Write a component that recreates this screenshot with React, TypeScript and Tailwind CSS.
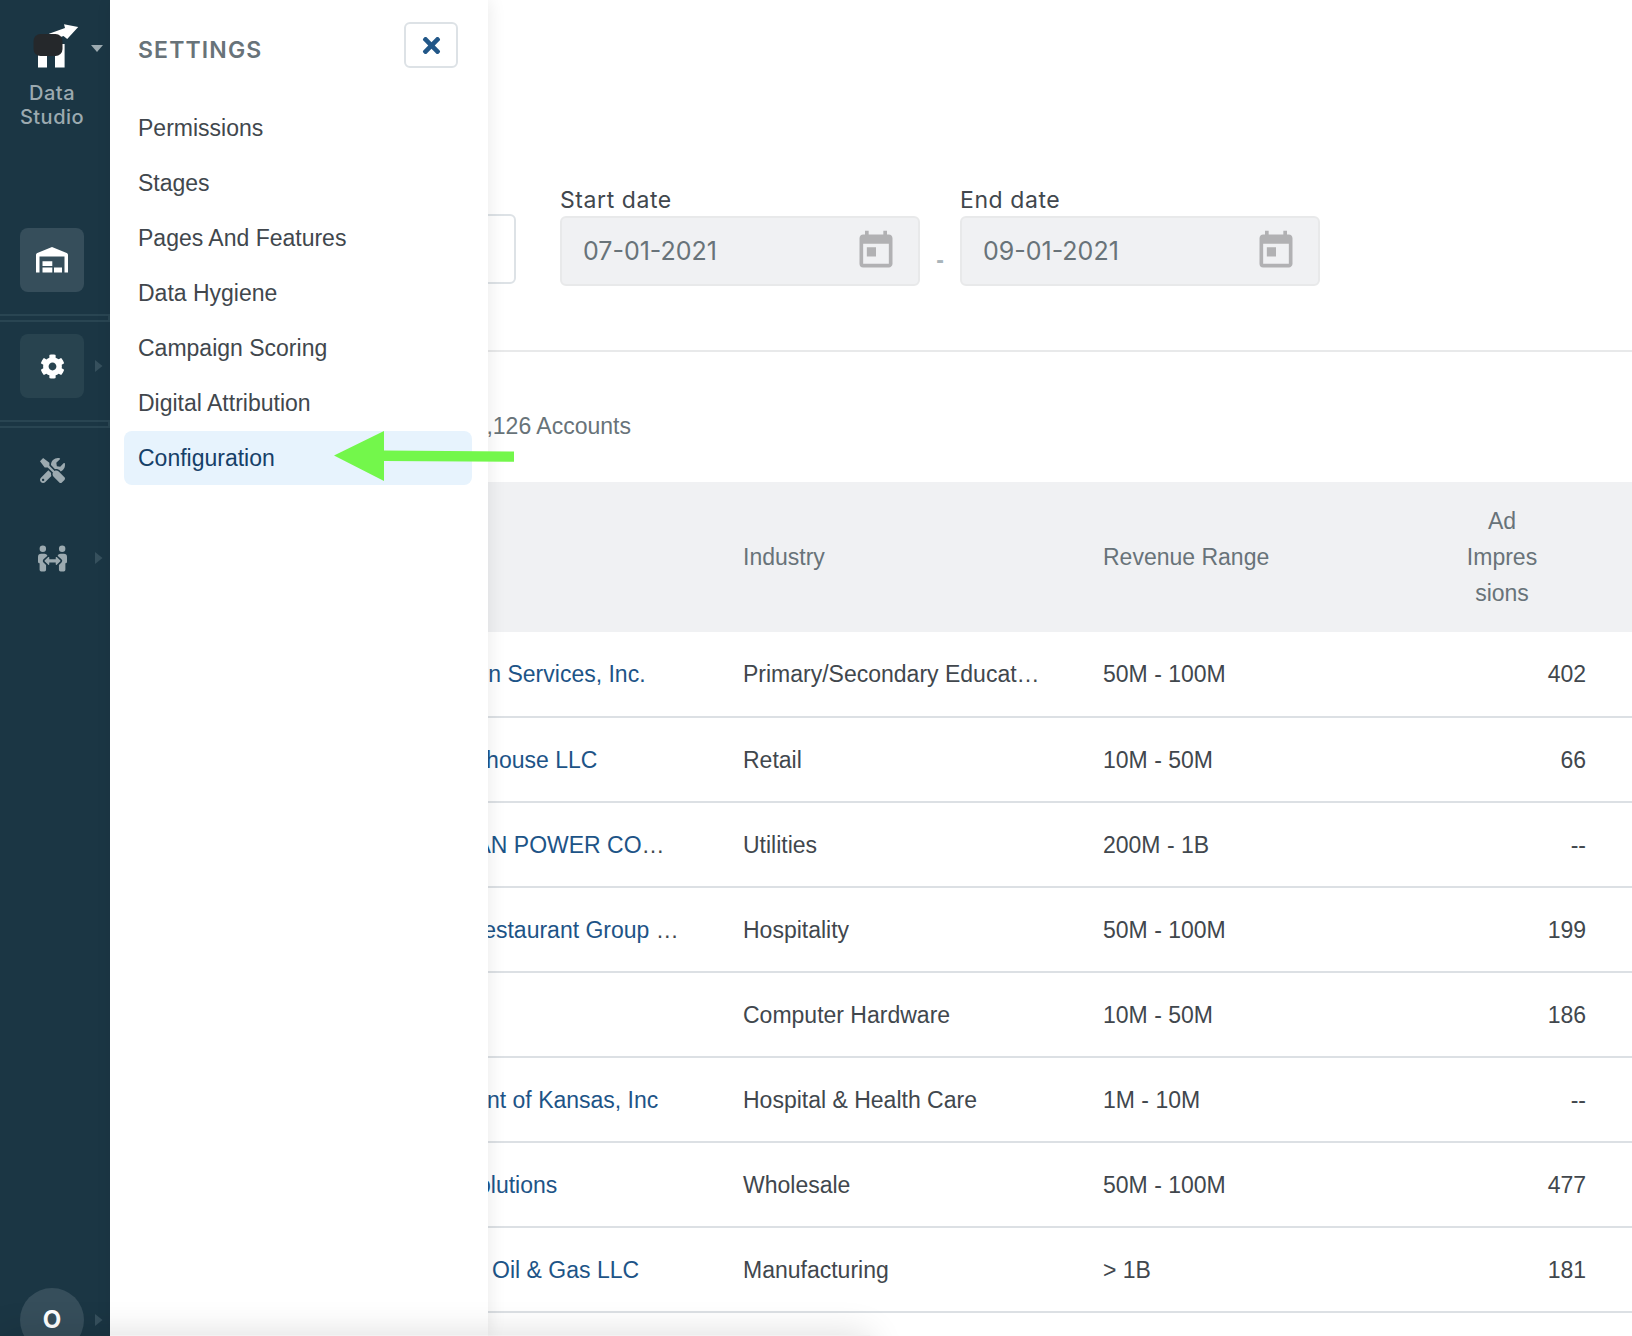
import React, { useState } from "react"
import { FaCog, FaPeopleArrows, FaTimes, FaTools } from "react-icons/fa"
import { MdToday } from "react-icons/md"

interface Account {
	name: string
	/** Set when the name was shortened; the ellipsis stays outside the link. */
	shortened?: boolean
	industry: string
	revenue: string
	impressions: string
}

const ACCOUNTS: Account[] = [
	{
		name: "Foundation Services, Inc.",
		industry: "Primary/Secondary Educat…",
		revenue: "50M - 100M",
		impressions: "402",
	},
	{ name: "Ace Warehouse LLC", industry: "Retail", revenue: "10M - 50M", impressions: "66" },
	{ name: "AMERICAN POWER CO", shortened: true, industry: "Utilities", revenue: "200M - 1B", impressions: "--" },
	{
		name: "Legacy Restaurant Group ",
		shortened: true,
		industry: "Hospitality",
		revenue: "50M - 100M",
		impressions: "199",
	},
	{ name: "Dyntek", industry: "Computer Hardware", revenue: "10M - 50M", impressions: "186" },
	{
		name: "Department of Kansas, Inc",
		industry: "Hospital & Health Care",
		revenue: "1M - 10M",
		impressions: "--",
	},
	{ name: "Harbor Solutions", industry: "Wholesale", revenue: "50M - 100M", impressions: "477" },
	{ name: "Stonewall Oil & Gas LLC", industry: "Manufacturing", revenue: "> 1B", impressions: "181" },
]

const SETTINGS_ITEMS = [
	"Permissions",
	"Stages",
	"Pages And Features",
	"Data Hygiene",
	"Campaign Scoring",
	"Digital Attribution",
	"Configuration",
]

const Logo = () => (
	<svg width="46" height="46" viewBox="33 23 46 46" aria-hidden="true">
		<path d="M78.200 27 64 24.300l1 3.700-16 5.800 2 6.500 12.500-4.300 3.700 3z" fill="#fff" />
		<path d="M38 50h9v17.500h-9zM55 44h9.600v23.500H55z" fill="#fff" />
		<rect x="33.500" y="34" width="29" height="22" rx="7" fill="#25282b" />
	</svg>
)

const WarehouseIcon = () => (
	<svg width="32" height="26" viewBox="0 0 32 26" fill="currentColor" aria-hidden="true">
		<path d="M16 0 1.300 5.900A2 2 0 0 0 0 7.800V25.500h3.500V9.500h25v16H32V7.800a2 2 0 0 0-1.300-1.900z" />
		<path d="M6.500 14.200h9.800v4.700H6.500zM6.500 20.500h9.800v5H6.500zM18 20.500h8v5h-8z" />
	</svg>
)

const SubmenuCaret = () => (
	<svg width="8" height="12" viewBox="0 0 8 12" className="ml-[11px] shrink-0" aria-hidden="true">
		<path d="M0 0v12l7.500-6z" fill="#36505d" />
	</svg>
)

interface NavItemProps {
	label: string
	tileClass?: string
	hasSubmenu?: boolean
	children: React.ReactNode
}

const NavItem: React.FC<NavItemProps> = ({ label, tileClass = "text-[#9caab0]", hasSubmenu, children }) => (
	<div className="flex items-center pl-5">
		<button
			type="button"
			aria-label={label}
			className={`flex size-16 shrink-0 items-center justify-center rounded-lg ${tileClass}`}>
			{children}
		</button>
		{hasSubmenu && <SubmenuCaret />}
	</div>
)

const NavSeparator = () => <div className="h-2 border-2 border-l-0 border-[#294552]" />

const NavRail = () => (
	<nav className="flex w-[110px] shrink-0 flex-col bg-[#1b3644]">
		<button type="button" className="mt-[23px] flex flex-col text-[#9caab0]">
			<span className="flex items-center pl-[33px]">
				<Logo />
				<svg width="12" height="7" viewBox="0 0 12 7" className="mt-1 ml-3 shrink-0" aria-hidden="true">
					<path d="M0 0h12L6 7z" fill="#9caab0" />
				</svg>
			</span>
			<span className="mt-3 w-[104px] px-4 text-center font-['Inter',sans-serif] text-[20px] leading-6 font-medium tracking-wide">
				Data Studio
			</span>
		</button>

		<div className="mt-[99px] flex flex-col">
			<NavItem label="Warehouse" tileClass="bg-[#364e5b] text-white">
				<WarehouseIcon />
			</NavItem>
		</div>
		<div className="mt-[22px] flex flex-col gap-3">
			<NavSeparator />
			<NavItem label="Settings" tileClass="bg-[#28434f] text-white" hasSubmenu>
				<FaCog size={25} />
			</NavItem>
		</div>
		<div className="mt-[22px] flex flex-col">
			<NavSeparator />
			<div className="mt-[10px] flex flex-col gap-6">
				<NavItem label="Tools">
					<FaTools size={25} />
				</NavItem>
				<NavItem label="Audiences" hasSubmenu>
					<FaPeopleArrows size={29} />
				</NavItem>
			</div>
		</div>

		<div className="mt-auto -mb-4 flex items-center pl-5">
			<button
				type="button"
				aria-label="Account"
				className="flex size-16 shrink-0 items-center justify-center rounded-full bg-[#364e5b] font-['Inter',sans-serif] text-[24px] font-bold text-white">
				O
			</button>
			<SubmenuCaret />
		</div>
	</nav>
)

const SettingsDrawer: React.FC<{ onClose: () => void }> = ({ onClose }) => {
	const [active, setActive] = useState("Configuration")

	return (
		<aside className="absolute inset-y-0 left-[110px] z-10 w-[378px] bg-white shadow-[2px_0_16px_rgba(0,0,0,0.08)]">
			<div className="flex items-start justify-between pt-[22px] pr-[30px] pl-7">
				<h2 className="pt-3 font-['Inter',sans-serif] text-[23px] leading-8 font-semibold tracking-wider text-[#687379]">
					SETTINGS
				</h2>
				<button
					type="button"
					aria-label="Close settings"
					onClick={onClose}
					className="flex h-[46px] w-[54px] items-center justify-center rounded-md border-2 border-[#dde2e6] text-[#225788]">
					<FaTimes size={25} />
				</button>
			</div>
			<ul className="mt-[33px] flex flex-col gap-px pr-4 pl-[14px]">
				{SETTINGS_ITEMS.map((item) => (
					<li key={item}>
						<a
							href="#"
							onClick={() => setActive(item)}
							className={`flex h-[54px] items-center rounded-lg px-[14px] ${
								item === active ? "bg-[#e7f3fd] text-[#164068]" : "text-[#41474d]"
							}`}>
							{item}
						</a>
					</li>
				))}
			</ul>
		</aside>
	)
}

const DateField: React.FC<{ id: string; label: string; value: string }> = ({ id, label, value }) => (
	<div className="flex w-[360px] flex-col font-['Inter',sans-serif]">
		<label htmlFor={id} className="text-[23px] leading-8 tracking-wide text-[#41474d]">
			{label}
		</label>
		<div className="flex h-[70px] items-center rounded-md border-2 border-[#e8e9ea] bg-[#f0f1f3] pr-[20px] pl-[21px]">
			<input id={id} type="text" disabled defaultValue={value} className="min-w-0 flex-1 text-[25px] text-[#687379]" />
			<MdToday size={44} className="shrink-0 text-[#b1b1b3]" />
		</div>
	</div>
)

const AccountsTable = () => (
	<table className="w-full table-fixed border-collapse text-left text-[#41474d]">
		<colgroup>
			<col className="w-[609px]" />
			<col className="w-[360px]" />
			<col className="w-[360px]" />
			<col />
		</colgroup>
		<thead>
			<tr className="h-[150px] bg-[#f0f1f3] leading-9 text-[#687379]">
				<th className="pr-6 pl-[276px] font-normal">Name</th>
				<th className="px-6 font-normal">Industry</th>
				<th className="px-6 font-normal">Revenue Range</th>
				<th className="pl-[25px] font-normal">
					<div className="w-[76px] text-center break-words">Ad Impressions</div>
				</th>
			</tr>
		</thead>
		<tbody>
			{ACCOUNTS.map((account) => (
				<tr key={account.name} className="h-[85px] border-b-2 border-[#dce0e4]">
					<td className="pr-6 pl-[276px] whitespace-nowrap">
						<a href="#" className="text-[#1d5487]">
							{account.name}
						</a>
						{account.shortened && "…"}
					</td>
					<td className="px-6 whitespace-nowrap">{account.industry}</td>
					<td className="px-6 whitespace-nowrap">{account.revenue}</td>
					<td className="pr-[46px] text-right">{account.impressions}</td>
				</tr>
			))}
		</tbody>
	</table>
)

/** Callout arrow that points at the selected settings entry. */
const CalloutArrow = () => (
	<svg
		width="180"
		height="50"
		viewBox="0 0 180 50"
		className="pointer-events-none absolute top-[431px] left-[334px] z-20"
		aria-hidden="true">
		<path d="M0 24.500 50 0v19.500L180 20.500v10.200L50 30v20z" fill="#73f74b" />
	</svg>
)

export default function App() {
	const [drawerOpen, setDrawerOpen] = useState(true)

	return (
		<div className="relative flex h-screen overflow-hidden bg-white font-['Liberation_Sans',Arial,sans-serif] text-[23px] leading-9">
			<NavRail />
			{drawerOpen && <SettingsDrawer onClose={() => setDrawerOpen(false)} />}

			<main className="min-w-0 flex-1 overflow-hidden">
				<div className="flex items-end border-b-2 border-[#e8e9ea] pt-[184px] pb-16 pl-[46px]">
					<input
						type="text"
						aria-label="Search accounts"
						className="mr-[44px] mb-0.5 h-[70px] w-[360px] rounded-md border-2 border-[#dde2e6] px-5"
					/>
					<DateField id="start-date" label="Start date" value="07-01-2021" />
					<span className="w-10 pb-2 text-center font-bold text-[#a9b4ba]">-</span>
					<DateField id="end-date" label="End date" value="09-01-2021" />
				</div>
				<p className="pt-14 pb-[38px] pl-[269px] text-[#687379]">Showing 1,126 Accounts</p>
				<AccountsTable />
			</main>

			{drawerOpen && <CalloutArrow />}
			{/* Status strip peeking in from the bottom edge */}
			<div className="pointer-events-none absolute -bottom-10 left-0 z-30 h-[41px] w-[870px] bg-black/5 shadow-[0_0_36px_rgba(0,0,0,0.14)]" />
		</div>
	)
}
